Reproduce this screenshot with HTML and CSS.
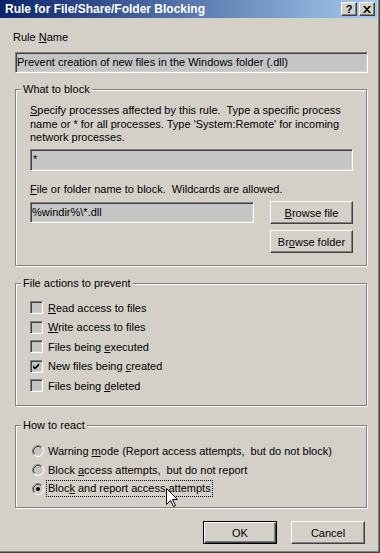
FILE: index.html
```html
<!DOCTYPE html>
<html lang="en">
	<head>
		<title>Rule for File/Share/Folder Blocking</title>
		<link rel="stylesheet" href="styles.css">
	</head>
	<body>
		<div class="window">
			<div class="titlebar">
				<span class="title">Rule for File/Share/Folder Blocking</span>
				<div class="caption-buttons">
					<span class="caption-btn help">?</span>
					<span class="caption-btn close">
						<svg width="8" height="7" viewBox="0 0 8 7"><path d="M0 0h2l2 2.2L6 0h2L5 3.5 8 7H6L4 4.8 2 7H0l3-3.5z" fill="#000"/></svg>
					</span>
				</div>
			</div>

			<div class="content">
				<div class="rule-label">Rule <u>N</u>ame</div>
				<div class="textbox rule-name">Prevent creation of new files in the Windows folder (.dll)</div>

				<div class="group block-group">
					<div class="group-title">What to block</div>
					<p class="desc"><u>S</u>pecify processes affected by this rule.&nbsp; Type a specific process<br>name or * for all processes. Type 'System:Remote' for incoming<br>network processes.</p>
					<div class="textbox process">*</div>
					<div class="file-label"><u>F</u>ile or folder name to block.&nbsp; Wildcards are allowed.</div>
					<div class="file-row">
						<div class="textbox file-name">%windir%\*.dll</div>
						<button class="btn browse"><u>B</u>rowse file</button>
					</div>
					<div class="folder-row">
						<button class="btn browse">Br<u>o</u>wse folder</button>
					</div>
				</div>

				<div class="group actions-group">
					<div class="group-title">File actions to prevent</div>
					<div class="options">
						<div class="option"><span class="check"></span><span><u>R</u>ead access to files</span></div>
						<div class="option"><span class="check"></span><span><u>W</u>rite access to files</span></div>
						<div class="option"><span class="check"></span><span>Files being <u>e</u>xecuted</span></div>
						<div class="option"><span class="check"><svg width="9" height="9" viewBox="0 0 9 9"><path d="M1 3.2l2 2 4.2-4.2v2.4L3 7.6 1 5.6z" fill="#000"/></svg></span><span>New files being <u>c</u>reated</span></div>
						<div class="option"><span class="check"></span><span>Files being <u>d</u>eleted</span></div>
					</div>
				</div>

				<div class="group react-group">
					<div class="group-title">How to react</div>
					<div class="options">
						<div class="option radio-row"><svg class="radio" width="12" height="12" viewBox="0 0 12 12"><circle cx="6" cy="6" r="4" fill="#c4c4c4"/><path d="M2.11 9.89A5.5 5.5 0 0 1 9.89 2.11" stroke="#808080" fill="none"/><path d="M9.89 2.11A5.5 5.5 0 0 1 2.11 9.89" stroke="#fff" fill="none"/><path d="M2.82 9.18A4.5 4.5 0 0 1 9.18 2.82" stroke="#404040" fill="none"/><path d="M9.18 2.82A4.5 4.5 0 0 1 2.82 9.18" stroke="#d4d0c8" fill="none"/></svg><span>Warning <u>m</u>ode (Report access attempts,&nbsp; but do not block)</span></div>
						<div class="option radio-row"><svg class="radio" width="12" height="12" viewBox="0 0 12 12"><circle cx="6" cy="6" r="4" fill="#c4c4c4"/><path d="M2.11 9.89A5.5 5.5 0 0 1 9.89 2.11" stroke="#808080" fill="none"/><path d="M9.89 2.11A5.5 5.5 0 0 1 2.11 9.89" stroke="#fff" fill="none"/><path d="M2.82 9.18A4.5 4.5 0 0 1 9.18 2.82" stroke="#404040" fill="none"/><path d="M9.18 2.82A4.5 4.5 0 0 1 2.82 9.18" stroke="#d4d0c8" fill="none"/></svg><span>Block <u>a</u>ccess attempts,&nbsp; but do not report</span></div>
						<div class="option radio-row"><svg class="radio" width="12" height="12" viewBox="0 0 12 12"><circle cx="6" cy="6" r="4" fill="#c4c4c4"/><path d="M2.11 9.89A5.5 5.5 0 0 1 9.89 2.11" stroke="#808080" fill="none"/><path d="M9.89 2.11A5.5 5.5 0 0 1 2.11 9.89" stroke="#fff" fill="none"/><path d="M2.82 9.18A4.5 4.5 0 0 1 9.18 2.82" stroke="#404040" fill="none"/><path d="M9.18 2.82A4.5 4.5 0 0 1 2.82 9.18" stroke="#d4d0c8" fill="none"/><circle cx="6" cy="6" r="2" fill="#000"/></svg><span class="focus">Bloc<u>k</u> and report access attempts</span></div>
					</div>
				</div>

				<div class="buttons">
					<button class="btn default">OK</button>
					<button class="btn">Cancel</button>
				</div>
			</div>

			<svg class="cursor" width="13" height="20" viewBox="0 0 13 20"><path d="M0.5 0.5V16.5L4.5 12.5L7.5 18.5L9.5 17.5L6.5 11.5H11.5Z" fill="#fff" stroke="#000"/></svg>
		</div>
	</body>
</html>
```

FILE: styles.css
```css
body { margin: 0; font-family: "Liberation Sans", Arial, sans-serif; font-size: 11px; color: #000; }
.window {
	position: relative;
	width: 380px; height: 553px;
	box-sizing: border-box;
	background: #d4d0c8;
	border-right: 1px solid #404040;
	border-bottom: 1px solid #404040;
	box-shadow: inset -1px -1px 0 #808080;
}
.titlebar {
	height: 18px;
	margin-right: 2px;
	padding-left: 5px;
	display: flex; align-items: center; justify-content: space-between;
	background: linear-gradient(to right, #0a246a, #a6caf0);
}
.title { color: #fff; font-weight: bold; font-size: 12px; white-space: nowrap; }
.caption-buttons { display: flex; gap: 2px; margin-right: 2px; }
.caption-btn {
	width: 16px; height: 14px;
	box-sizing: border-box;
	display: flex; align-items: center; justify-content: center;
	background: #d4d0c8;
	border: 1px solid; border-color: #fff #404040 #404040 #fff;
	box-shadow: inset -1px -1px 0 #808080;
	font-weight: bold; font-size: 11px; line-height: 12px;
}

.content { padding: 13px 11px 0 15px; }
.rule-label { line-height: 13px; margin-left: -2px; }
.textbox {
	box-sizing: border-box;
	height: 21px;
	padding: 0 1px;
	background: #c4c4c4;
	border: 1px solid; border-color: #808080 #fff #fff #808080;
	box-shadow: inset 1px 1px 0 #404040, inset -1px -1px 0 #d4d0c8;
	line-height: 19px;
	white-space: nowrap;
}
.rule-name { margin-top: 8px; }

.group {
	margin-right: 1px;
	border: 1px solid #808080;
	box-shadow: 1px 1px 0 #fff, inset 1px 1px 0 #fff;
	padding: 0 13px 12px 14px;
}
.group-title {
	display: table;
	margin: -7px 0 0 -9px;
	padding: 0 2px;
	background: #d4d0c8;
	line-height: 13px;
	white-space: nowrap;
}
.block-group { margin-top: 16px; }
.desc { margin: 8px 0 0; line-height: 13.5px; white-space: nowrap; }
.process { height: 22px; margin-top: 4.5px; padding-left: 2px; }
.file-label { margin-top: 11.5px; line-height: 13px; white-space: nowrap; }
.file-row { display: flex; justify-content: space-between; margin-top: 5.5px; }
.file-name { width: 224px; margin-top: 1px; }
.folder-row { display: flex; justify-content: flex-end; margin-top: 6px; }

.btn {
	box-sizing: border-box;
	height: 23px; width: 74px;
	padding: 0;
	font: inherit; color: #000;
	background: #d4d0c8;
	border: 1px solid; border-color: #fff #404040 #404040 #fff;
	box-shadow: inset -1px -1px 0 #808080;
}
.browse { width: 83px; }
.default {
	border-color: #000;
	box-shadow: inset 1px 1px 0 #fff, inset -1px -1px 0 #404040, inset -2px -2px 0 #808080;
}

.actions-group { margin-top: 17px; padding-bottom: 9.5px; }
.actions-group .options { padding-top: 8px; }
.option { display: flex; align-items: center; height: 19.5px; white-space: nowrap; }
.check {
	box-sizing: border-box;
	flex: none;
	width: 13px; height: 13px;
	margin-right: 5px;
	display: flex; align-items: center; justify-content: center;
	background: #c4c4c4;
	border: 1px solid; border-color: #808080 #fff #fff #808080;
	box-shadow: inset 1px 1px 0 #404040, inset -1px -1px 0 #d4d0c8;
}

.react-group { margin-top: 19px; padding-bottom: 9px; }
.react-group .options { padding-top: 9px; }
.radio-row { height: 19px; }
.radio { margin: 0 4px 0 2px; flex: none; }
.focus { padding: 1px; margin-left: -1px; outline: 1px dotted #000; line-height: 13px; }

.buttons { display: flex; justify-content: flex-end; gap: 14px; margin-top: 13px; padding-right: 3px; }

.cursor { position: absolute; left: 166px; top: 488px; }
```
